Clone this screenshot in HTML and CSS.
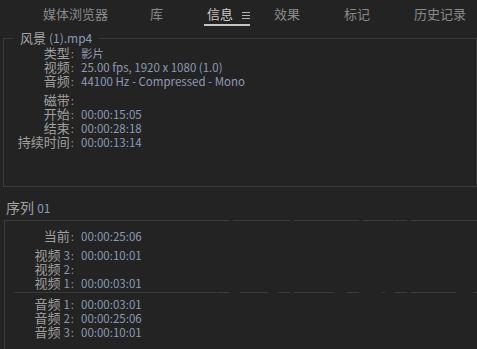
FILE: index.html
```html
<!DOCTYPE html>
<html lang="zh">
<head>
    <meta charset="UTF-8">
    <title>信息</title>
    <link rel="stylesheet" href="styles.css">
</head>
<body>
    <div class="tabs">
        <div class="tab">媒体浏览器</div>
        <div class="tab">库</div>
        <div class="tab active">信息
            <svg class="menuIcon" width="8" height="8" viewBox="0 0 8 8"><path d="M0 1.5H8M0 4.5H8M0 7.5H8" stroke="#b4b4b4" stroke-width="1"/></svg>
        </div>
        <div class="tab wide">效果</div>
        <div class="tab wide">标记</div>
        <div class="tab wide">历史记录</div>
    </div>

    <fieldset class="clipBox">
        <legend>风景 <span class="num">(1).mp4</span></legend>
        <div class="group">
            <div class="row"><span class="lbl">类型<i>:</i></span><span class="val">影片</span></div>
            <div class="row"><span class="lbl">视频<i>:</i></span><span class="val">25.00 fps, 1920 x 1080 (1.0)</span></div>
            <div class="row"><span class="lbl">音频<i>:</i></span><span class="val">44100 Hz - Compressed - Mono</span></div>
        </div>
        <div class="group gap">
            <div class="row"><span class="lbl">磁带<i>:</i></span><span class="val"></span></div>
            <div class="row"><span class="lbl">开始<i>:</i></span><span class="val">00:00:15:05</span></div>
            <div class="row"><span class="lbl">结束<i>:</i></span><span class="val">00:00:28:18</span></div>
            <div class="row"><span class="lbl">持续时间<i>:</i></span><span class="val">00:00:13:14</span></div>
        </div>
    </fieldset>

    <div class="seqTitle">序列 <span class="num">01</span></div>
    <div class="seqBox">
        <div class="rule topRule"></div>
        <div class="row first"><span class="lbl">当前<i>:</i></span><span class="val">00:00:25:06</span></div>
        <div class="group gap">
            <div class="row"><span class="lbl">视频 <b>3</b><i>:</i></span><span class="val">00:00:10:01</span></div>
            <div class="row"><span class="lbl">视频 <b>2</b><i>:</i></span><span class="val"></span></div>
            <div class="row"><span class="lbl">视频 <b>1</b><i>:</i></span><span class="val">00:00:03:01</span></div>
        </div>
        <div class="rule midRule"></div>
        <div class="group audio">
            <div class="row"><span class="lbl">音频 <b>1</b><i>:</i></span><span class="val">00:00:03:01</span></div>
            <div class="row"><span class="lbl">音频 <b>2</b><i>:</i></span><span class="val">00:00:25:06</span></div>
            <div class="row"><span class="lbl">音频 <b>3</b><i>:</i></span><span class="val">00:00:10:01</span></div>
        </div>
    </div>
</body>
</html>
```

FILE: styles.css
```css
body{
    margin: 0;
    background-color: #232323;
    font-family: "Noto Sans CJK SC", "Noto Sans", sans-serif;
    color: #9d9d9d;
    overflow: hidden;
}
.tabs{
    display: flex;
    height: 26px;
    padding-left: 22px;
    margin-bottom: 4px;
}
.tab{
    margin: 0 21px;
    padding-top: 4px;
    line-height: 20px;
    font-size: 13px;
    color: #8a8a8a;
    white-space: nowrap;
}
.tab.wide{
    margin-right: 22px;
}
.tab.wide + .tab.wide{
    margin-left: 22px;
}
.tab.active{
    margin: 0 3px 0 20px;
    padding-left: 3px;
    color: #c8c8c8;
    border-bottom: 2px solid #c4c4c4;
    display: flex;
    align-items: center;
}
.menuIcon{
    margin-left: 9px;
    margin-top: 1px;
}
.clipBox{
    margin: 0 0 0 3px;
    padding: 0 0 37px 0;
    border: 1px solid #3a3a3a;
    min-width: 0;
}
.clipBox legend{
    margin-left: 9px;
    padding: 0 7px;
    line-height: 16px;
    font-size: 13px;
    color: #a3a3a3;
}
.num{
    font-size: 12px;
    color: #8b9cb2;
}
.row{
    display: flex;
    height: 14px;
    line-height: 14px;
}
.lbl{
    width: 70px;
    text-align: right;
    font-size: 13px;
    color: #a0a0a0;
    white-space: nowrap;
}
.lbl i{
    font-style: normal;
    font-size: 11.5px;
    color: #8a8a8a;
    margin-left: 1px;
}
.lbl b{
    font-weight: normal;
    font-size: 11.5px;
    color: #8b9cb2;
}
.val{
    margin-left: 7px;
    font-size: 11.5px;
    color: #8b9cb2;
    white-space: nowrap;
}
.gap{
    margin-top: 5px;
}
.seqTitle{
    margin: 12px 0 4px 6px;
    line-height: 16px;
    font-size: 14px;
    color: #a3a3a3;
}
.seqBox{
    margin-left: 4px;
    border-left: 1px solid #3a3a3a;
    height: 129px;
}
.seqBox .lbl{
    width: 69px;
}
.rule{
    height: 1px;
}
.topRule{
    background: linear-gradient(to right,
        #3a3a3a 0 224px, transparent 224px 228px,
        #3a3a3a 228px 285px, transparent 285px 289px,
        #3a3a3a 289px 354px, transparent 354px 358px,
        #3a3a3a 358px 389px, transparent 389px 390px,
        #3a3a3a 390px 402px, transparent 402px 406px,
        #3a3a3a 406px);
}
.first{
    margin-top: 8px;
}
.midRule{
    margin: 2px 0 0 9px;
    background: linear-gradient(to right,
        #3a3a3a 0 202px, transparent 202px 203px,
        #3a3a3a 203px 215px, transparent 215px 226px,
        #3a3a3a 226px 254px, transparent 254px 264px,
        #3a3a3a 264px 276px, transparent 276px 280px,
        #3a3a3a 280px 320px, transparent 320px 333px,
        #3a3a3a 333px 345px, transparent 345px 368px,
        #3a3a3a 368px 371px, transparent 371px 381px,
        #3a3a3a 381px 393px, transparent 393px 397px,
        #3a3a3a 397px 442px, transparent 442px 459px,
        #3a3a3a 459px);
}
.audio{
    margin-top: 4px;
}
```
